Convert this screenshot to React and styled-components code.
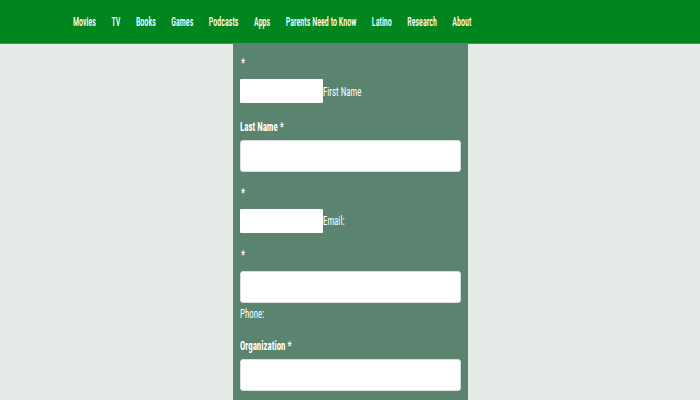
import React from "react";
import styled, { createGlobalStyle } from "styled-components";

const GlobalStyle = createGlobalStyle`
  html, body {
    margin: 0;
    padding: 0;
    background: #e6ebe8;
    font-family: Roboto, "Liberation Sans", sans-serif;
    font-stretch: 75%;
  }
`;

const Header = styled.header`
  height: 43px;
  background: #00851f;
  border-bottom: 1px solid #3aa04f;
  display: flex;
  align-items: center;
  padding-left: 73px;
`;

const Nav = styled.nav`
  display: flex;
  gap: 24px;
  transform: scaleX(0.644);
  transform-origin: left center;
  white-space: nowrap;
`;

const NavItem = styled.a`
  color: #fff;
  font-size: 12.5px;
  font-weight: 500;
  text-decoration: none;
`;

const Panel = styled.form`
  width: 221px;
  margin: 0 auto;
  padding: 11px 7px 8px 7px;
  background: #5a8370;
  color: #fff;
  min-height: 356px;
  box-sizing: content-box;
  font-size: 12px;
  line-height: 16px;
`;

const Star = styled.div`
  height: 24px;
  padding-left: 1px;
`;

const InlineRow = styled.div`
  display: flex;
  align-items: center;
  margin-bottom: ${(p) => p.$mb || 0}px;
`;

const SmallInput = styled.input`
  width: 83px;
  height: 24px;
  border: none;
  border-radius: 1px;
  padding: 0;
  background: #fff;
`;

const Text = styled.span`
  display: inline-block;
  font-size: 12px;
  font-weight: ${(p) => (p.$bold ? 700 : 400)};
  transform: scaleX(0.74);
  transform-origin: left center;
  white-space: nowrap;
  padding-top: ${(p) => p.$pt || 0}px;
`;

const FieldLabel = styled.label`
  display: block;
  height: 16px;
  margin-bottom: 5px;
`;

const WideInput = styled.input`
  display: block;
  width: 221px;
  height: 32px;
  box-sizing: border-box;
  border: 1px solid #d8dedb;
  border-radius: 3px;
  background: #fff;
`;

const Help = styled.div`
  height: 16px;
  margin: 3px 0 16px;
`;

const Spacer = styled.div`
  height: ${(p) => p.$h}px;
`;

const links = [
  "Movies",
  "TV",
  "Books",
  "Games",
  "Podcasts",
  "Apps",
  "Parents Need to Know",
  "Latino",
  "Research",
  "About",
];

export default function App() {
  return (
    <>
      <GlobalStyle />
      <Header>
        <Nav>
          {links.map((l) => (
            <NavItem key={l} href="#">
              {l}
            </NavItem>
          ))}
        </Nav>
      </Header>
      <Panel>
        <Star>
          <Text $bold>*</Text>
        </Star>
        <InlineRow $mb={16}>
          <SmallInput />
          <Text $pt={2}>First Name</Text>
        </InlineRow>
        <FieldLabel>
          <Text $bold>Last Name *</Text>
        </FieldLabel>
        <WideInput />
        <Spacer $h={13} />
        <Star>
          <Text $bold>*</Text>
        </Star>
        <InlineRow $mb={14}>
          <SmallInput />
          <Text>Email:</Text>
        </InlineRow>
        <Star>
          <Text $bold>*</Text>
        </Star>
        <WideInput />
        <Help>
          <Text>Phone:</Text>
        </Help>
        <FieldLabel>
          <Text $bold>Organization *</Text>
        </FieldLabel>
        <WideInput />
      </Panel>
    </>
  );
}
